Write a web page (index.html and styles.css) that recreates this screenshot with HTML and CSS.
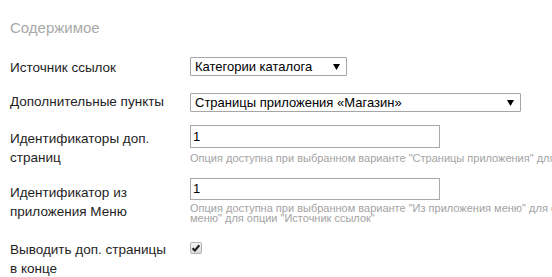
FILE: index.html
```html
<!DOCTYPE html>
<html lang="ru">
<head>
<meta charset="utf-8">
<title>Содержимое</title>
<link rel="stylesheet" href="styles.css">
</head>
<body>
<div class="page">
  <div class="title">Содержимое</div>
  <div class="form">
    <div class="row r1">
      <div class="label">Источник ссылок</div>
      <div class="field">
        <div class="select s-short"><span>Категории каталога</span><svg class="arrow" width="7" height="6" viewBox="0 0 7 6"><path d="M0 0H7L3.5 6Z" fill="#000"/></svg></div>
      </div>
    </div>
    <div class="row r2">
      <div class="label">Дополнительные пункты</div>
      <div class="field f2">
        <div class="select s-long"><span>Страницы приложения «Магазин»</span><svg class="arrow" width="7" height="6" viewBox="0 0 7 6"><path d="M0 0H7L3.5 6Z" fill="#000"/></svg></div>
      </div>
    </div>
    <div class="row r3">
      <div class="label l3">Идентификаторы доп. страниц</div>
      <div class="field">
        <div class="input">1</div>
        <div class="hint">Опция доступна при выбранном варианте "Страницы приложения" для опции "Дополнительные пункты"</div>
      </div>
    </div>
    <div class="row r4">
      <div class="label l4">Идентификатор из приложения Меню</div>
      <div class="field">
        <div class="input i2">1</div>
        <div class="hint h2">Опция доступна при выбранном варианте "Из приложения меню" для опции "Дополнительные пункты" и "Из приложения<br>меню" для опции "Источник ссылок"</div>
      </div>
    </div>
    <div class="row r5">
      <div class="label">Выводить доп. страницы в конце</div>
      <div class="field f5">
        <div class="checkbox"><svg width="12" height="12" viewBox="0 0 12 12"><path d="M2.6 6.3L4.8 8.6L9.3 3.2" fill="none" stroke="#222" stroke-width="2.2" stroke-linejoin="round"/></svg></div>
      </div>
    </div>
  </div>
</div>
</body>
</html>
```
FILE: styles.css
```css
html, body {
  margin: 0;
  padding: 0;
  overflow: hidden;
  background: #fff;
}
body {
  font-family: "Liberation Sans", Arial, sans-serif;
  font-size: 13px;
  color: #1e1e1e;
}
.page {
  padding: 19px 10px 0;
}
.title {
  font-size: 15px;
  line-height: 17px;
  color: #a9a9a9;
}
.row {
  display: flex;
  align-items: flex-start;
}
.label {
  width: 160px;
  margin-right: 20px;
  flex: none;
  font-size: 13.5px;
  line-height: 19px;
}
.field {
  flex: none;
}
.r1 { margin-top: 21px; }
.r1 .label { padding-top: 1px; }
.r2 { margin-top: 15px; }
.f2 { margin-top: 1px; }
.r3 { margin-top: 13px; }
.l3 { padding-top: 4px; }
.r4 { margin-top: 11px; }
.l4 { padding-top: 5px; }
.r5 { margin-top: 17px; }
.f5 { margin-top: 2px; }

.select {
  box-sizing: border-box;
  height: 19px;
  border: 1px solid #a6a6a6;
  border-radius: 1px;
  background: #fff;
  display: flex;
  align-items: center;
  justify-content: space-between;
  padding: 0 6px 0 4px;
  line-height: 17px;
  color: #000;
}
.s-short { width: 157px; }
.s-long { width: 331px; }
.arrow { flex: none; display: block; }

.input {
  box-sizing: border-box;
  width: 250px;
  height: 23px;
  border: 1px solid #a9a9a9;
  padding: 0 2px;
  line-height: 21px;
  color: #000;
}
.i2 {
  height: 22px;
  line-height: 20px;
}
.hint {
  margin-top: 5px;
  font-size: 11px;
  line-height: 10px;
  color: #a3a3a3;
  white-space: nowrap;
}
.h2 {
  margin-top: 3px;
}
.checkbox {
  box-sizing: border-box;
  width: 12px;
  height: 12px;
  border: 1px solid #b3b3b3;
  border-radius: 2px;
  background: linear-gradient(#f4f4f4, #dcdcdc);
}
.checkbox svg {
  display: block;
  margin: -1px;
}
```
